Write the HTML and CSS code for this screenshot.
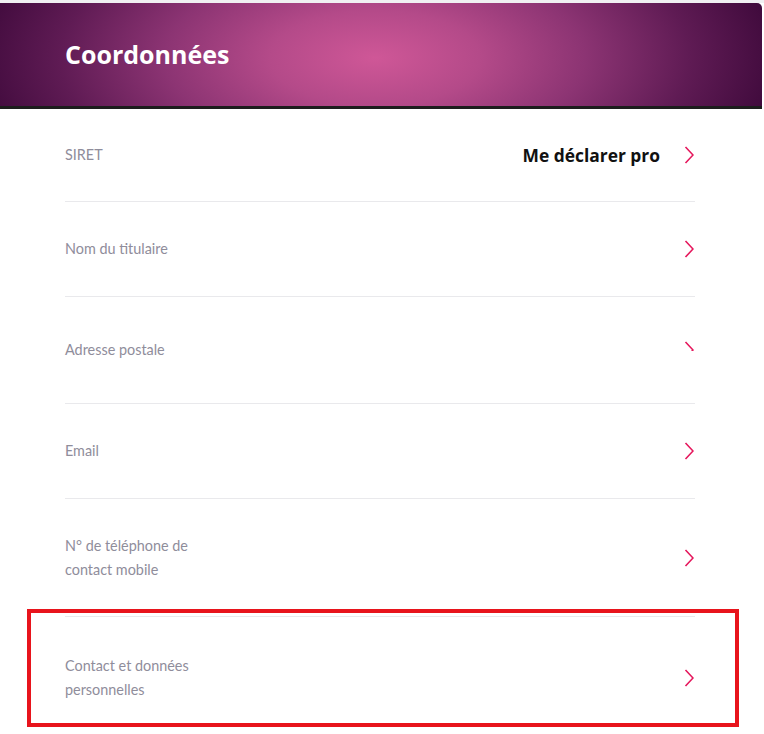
FILE: index.html
```html
<!DOCTYPE html>
<html lang="fr">
<head>
<meta charset="utf-8">
<title>Coordonnées</title>
<link rel="stylesheet" href="styles.css">
</head>
<body>
<div class="page">
  <header class="hero">
    <h1 class="hero-title">Coordonnées</h1>
  </header>
  <div class="hero-rule"></div>
  <ul class="list">
    <li class="row row-1">
      <span class="label">SIRET</span>
      <span class="value">Me déclarer pro</span>
      <svg class="chev" viewBox="0 0 10 18"><path d="M1.5 1 L9 9 L1.5 17" /></svg>
    </li>
    <li class="row row-2">
      <span class="label">Nom du titulaire</span>
      <svg class="chev" viewBox="0 0 10 18"><path d="M1.5 1 L9 9 L1.5 17" /></svg>
    </li>
    <li class="row row-3">
      <span class="label">Adresse postale</span>
      <span class="chev-clip"><svg class="chev" viewBox="0 0 10 18"><path d="M1.5 1 L9 9 L1.5 17" /></svg></span>
    </li>
    <li class="row row-4">
      <span class="label">Email</span>
      <svg class="chev" viewBox="0 0 10 18"><path d="M1.5 1 L9 9 L1.5 17" /></svg>
    </li>
    <li class="row row-5">
      <span class="label">N° de téléphone de<br>contact mobile</span>
      <svg class="chev" viewBox="0 0 10 18"><path d="M1.5 1 L9 9 L1.5 17" /></svg>
    </li>
    <li class="row row-6">
      <span class="label">Contact et données<br>personnelles</span>
      <svg class="chev" viewBox="0 0 10 18"><path d="M1.5 1 L9 9 L1.5 17" /></svg>
    </li>
  </ul>
  <div class="highlight"></div>
</div>
</body>
</html>
```
FILE: styles.css
```css
* { box-sizing: border-box; }
html, body { margin: 0; padding: 0; background: #ffffff; }
body { font-family: Lato, "Open Sans", sans-serif; overflow: hidden; }
.page {
  position: relative;
  width: 764px;
  height: 734px;
  padding-top: 3px;
  background: linear-gradient(#f0f0f2 0, #f0f0f2 3px, #ffffff 3px);
}
.hero {
  width: 762px;
  height: 103px;
  border-top-right-radius: 5px;
  background: radial-gradient(ellipse 420px 190px at 375px 55px, #cf5797 0%, #b44a89 25%, #8c3473 50%, #5f1b54 75%, #3a0738 100%);
  display: flex;
  align-items: center;
  padding-left: 65px;
  padding-bottom: 1px;
}
.hero-title {
  margin: 0;
  font-family: "Open Sans", sans-serif;
  font-weight: 700;
  font-size: 25px;
  color: #ffffff;
  letter-spacing: 0;
}
.hero-rule {
  width: 762px;
  height: 3px;
  background: #1d1d1d;
}
.list {
  list-style: none;
  margin: 0;
  padding: 0 69px 0 65px;
}
.row {
  display: flex;
  align-items: center;
  border-bottom: 1px solid #e9e9ec;
  padding-right: 1px;
}
.row-1 { height: 93px; }
.row-2 { height: 95px; }
.row-3 { height: 107px; }
.row-4 { height: 95px; }
.row-5 { height: 118px; }
.row-6 { height: 122px; border-bottom: none; }
.label {
  flex: 1;
  font-size: 14.4px;
  line-height: 24px;
  color: #8f8d9b;
}
.value {
  font-family: "Open Sans", sans-serif;
  font-weight: 700;
  font-size: 17.4px;
  color: #111111;
  margin-right: 24px;
}
.chev {
  width: 10px;
  height: 18px;
  display: block;
  fill: none;
  stroke: #e5175c;
  stroke-width: 1.6;
}
.chev-clip {
  display: block;
  width: 10px;
  height: 18px;
  overflow: hidden;
}
.chev-clip .chev { clip-path: inset(0 0 45% 0); }
.highlight {
  position: absolute;
  left: 27px;
  top: 609px;
  width: 712px;
  height: 118px;
  border: 4px solid #e8141c;
}
```
